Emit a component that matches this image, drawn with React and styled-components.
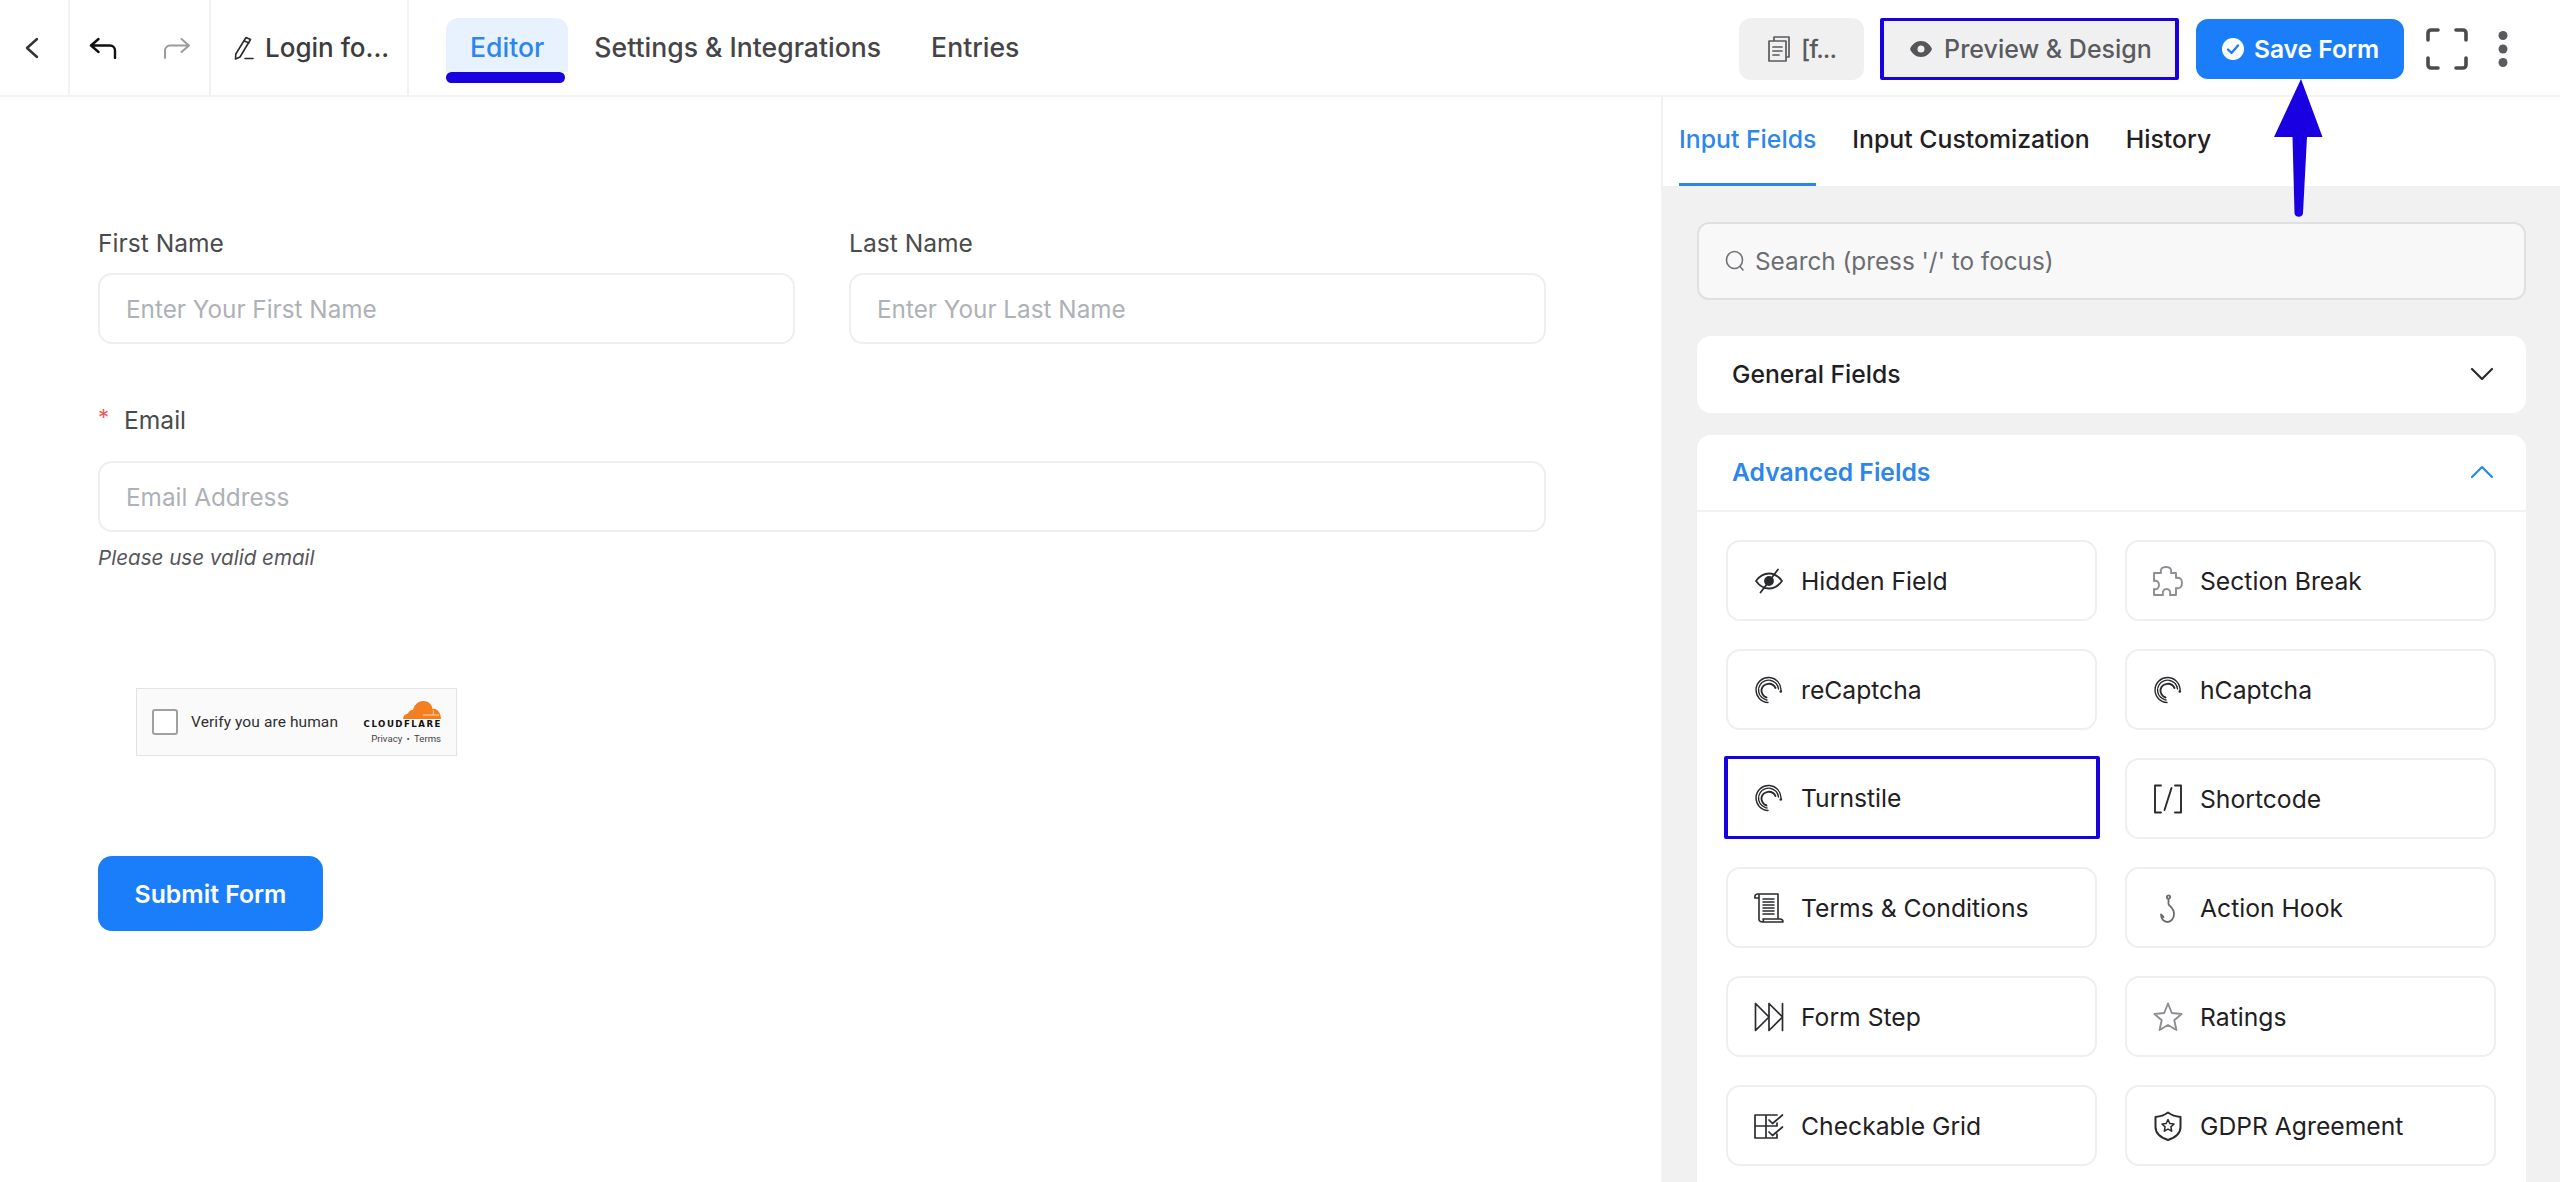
import styled, { createGlobalStyle } from "styled-components";
import { useState } from "react";

const Global = createGlobalStyle`
  * { box-sizing: border-box; }
  html, body { margin: 0; padding: 0; background: #fff; }
  body { font-family: Inter, "Liberation Sans", sans-serif; }
`;

const BLUE = "#1a7efb";
const MARK = "#1800e0";

const Page = styled.div`
  position: relative;
  width: 2560px;
  height: 1182px;
  overflow: hidden;
  display: flex;
  flex-direction: column;
  background: #fff;
`;

const TopBar = styled.header`
  height: 97px;
  flex: none;
  display: flex;
  align-items: stretch;
  border-bottom: 2px solid #f2f2f3;
`;

const Cell = styled.div`
  width: ${p => p.$w}px;
  flex: none;
  display: flex;
  align-items: center;
  gap: ${p => p.$gap || 0}px;
  padding-left: ${p => p.$pl || 0}px;
  border-right: 2px solid #f2f2f3;
`;

const PageTitle = styled.span`
  font-size: 26px;
  font-weight: 500;
  color: #3c3c3e;
  white-space: nowrap;
`;

const Nav = styled.nav`
  display: flex;
  align-items: flex-start;
  padding: 18px 0 0 37px;
  gap: 26px;
`;

const NavItem = styled.a`
  position: relative;
  height: 54px;
  display: flex;
  align-items: center;
  padding: 3px ${p => (p.$active ? 24 : 0)}px 0;
  margin-left: ${p => p.$ml || 0}px;
  border-radius: 12px 12px 0 0;
  font-size: 26.6px;
  font-weight: 500;
  white-space: nowrap;
  color: ${p => (p.$active ? "#2d86ea" : "#454547")};
  background: ${p => (p.$active ? "#e8f2ff" : "transparent")};
`;

const EditorMark = styled.span`
  position: absolute;
  left: 0;
  right: 3px;
  top: 54px;
  height: 11px;
  border-radius: 6px;
  background: ${MARK};
`;

const Actions = styled.div`
  margin-left: auto;
  display: flex;
  align-items: center;
  padding-top: 2px;
`;

const GreyBtn = styled.button`
  height: 62px;
  width: ${p => p.$w}px;
  margin-left: ${p => p.$ml || 0}px;
  display: flex;
  align-items: center;
  justify-content: center;
  gap: ${p => p.$gap || 12}px;
  padding: 0 0 0 ${p => (p.$marked ? 3 : 0)}px;
  font-family: inherit;
  font-size: 25px;
  font-weight: 500;
  letter-spacing: ${p => p.$ls || 0}px;
  color: #5a5b5e;
  background: #f0f0f1;
  border: ${p => (p.$marked ? `solid ${MARK}` : "0")};
  border-width: ${p => (p.$marked ? "3px 4px" : "0")};
  border-radius: ${p => (p.$marked ? 2 : 12)}px;
`;

const SaveBtn = styled.button`
  height: 60px;
  width: 208px;
  margin-left: 17px;
  display: flex;
  align-items: center;
  justify-content: center;
  gap: 9px;
  padding: 0;
  font-family: inherit;
  font-size: 24.6px;
  font-weight: 600;
  color: #fff;
  background: ${BLUE};
  border: 0;
  border-radius: 12px;
`;

const IconOnly = styled.span`
  display: flex;
  margin-left: ${p => p.$ml}px;
  margin-right: ${p => p.$mr || 0}px;
`;

const Arrow = styled.svg`
  position: absolute;
  left: 2268px;
  top: 76px;
`;

const Main = styled.main`
  flex: 1;
  display: flex;
  min-height: 0;
`;

const Canvas = styled.section`
  flex: 1;
  padding: 131px 115px 0 98px;
`;

const Row = styled.div`
  display: grid;
  grid-template-columns: ${p => (p.$split ? "1fr 1fr" : "1fr")};
  gap: 54px;
  margin-bottom: ${p => p.$mb || 0}px;
`;

const Label = styled.label`
  display: flex;
  align-items: center;
  height: 30px;
  margin-bottom: ${p => p.$mb || 15}px;
  font-size: 24.6px;
  color: #4a4b4d;
`;

const Star = styled.span`
  color: #f05b5b;
  width: 26px;
  font-size: 22px;
  position: relative;
  top: -3px;
`;

const InputBox = styled.div`
  height: 71px;
  display: flex;
  align-items: center;
  padding-left: 26px;
  border: 2px solid #eeeff0;
  border-radius: 14px;
  font-size: 24.3px;
  color: #aeb1b6;
  background: #fff;
`;

const Help = styled.div`
  margin-top: 13px;
  font-size: 20.6px;
  font-style: italic;
  color: #55565a;
`;

const Turnstile = styled.div`
  margin: 118px 0 0 38px;
  width: 321px;
  height: 68px;
  display: flex;
  align-items: center;
  padding-left: 15px;
  background: #fafafa;
  border: 1px solid #e3e3e3;
`;

const CheckBox = styled.span`
  width: 26px;
  height: 26px;
  flex: none;
  background: #fff;
  border: 2px solid #a0a0a0;
  border-radius: 3px;
`;

const VerifyText = styled.span`
  margin-left: 13px;
  font-family: Roboto, "Liberation Sans", sans-serif;
  font-size: 15.5px;
  color: #313131;
  white-space: nowrap;
  letter-spacing: 0.1px;
`;

const CfBlock = styled.div`
  margin-left: auto;
  margin-right: 15px;
  display: flex;
  flex-direction: column;
  align-items: flex-end;
`;

const CfWord = styled.span`
  font-family: "DejaVu Sans", sans-serif;
  font-size: 8.6px;
  font-weight: 700;
  line-height: 9px;
  letter-spacing: 1.5px;
  margin-right: -1px;
  color: #111;
  margin-top: 1px;
`;

const CfLinks = styled.span`
  margin-top: 4px;
  font-family: Roboto, "Liberation Sans", sans-serif;
  font-size: 9.6px;
  line-height: 11px;
  word-spacing: 2px;
  color: #444;
  white-space: nowrap;
`;

const SubmitBtn = styled.button`
  display: block;
  margin-top: 100px;
  width: 225px;
  height: 75px;
  padding: 0;
  font-family: inherit;
  font-size: 24.8px;
  font-weight: 600;
  color: #fff;
  background: ${BLUE};
  border: 0;
  border-radius: 14px;
`;

const Sidebar = styled.aside`
  width: 899px;
  flex: none;
  display: flex;
  flex-direction: column;
  background: #f1f1f2;
  border-left: 2px solid #f2f2f3;
`;

const SideTabs = styled.div`
  height: 89px;
  flex: none;
  display: flex;
  gap: 36px;
  padding-left: 16px;
  background: #fff;
`;

const SideTab = styled.div`
  display: flex;
  align-items: center;
  padding-bottom: 3px;
  font-size: 24.8px;
  font-weight: 500;
  white-space: nowrap;
  color: ${p => (p.$active ? "#2d86ea" : "#1f2023")};
  border-bottom: 3px solid ${p => (p.$active ? "#2d86ea" : "transparent")};
`;

const SideBody = styled.div`
  flex: 1;
  min-height: 0;
  display: flex;
  flex-direction: column;
  padding: 36px 34px 0;
`;

const Search = styled.div`
  height: 78px;
  flex: none;
  display: flex;
  align-items: center;
  gap: 10px;
  padding-left: 26px;
  margin-bottom: 36px;
  font-size: 24.3px;
  color: #6b6d71;
  background: #f8f8f9;
  border: 2px solid #dfe0e2;
  border-radius: 12px;
`;

const Card = styled.div`
  background: #fff;
  flex: ${p => (p.$open ? 1 : "none")};
  margin-bottom: ${p => (p.$open ? 0 : 22)}px;
  border-radius: ${p => (p.$open ? "14px 14px 0 0" : "14px")};
`;

const CardHead = styled.div`
  height: 77px;
  display: flex;
  align-items: center;
  justify-content: space-between;
  padding: 0 32px 2px 35px;
  font-size: 24.7px;
  font-weight: ${p => (p.$open ? 600 : 500)};
  color: ${p => (p.$open ? "#2d86ea" : "#1f2023")};
  border-bottom: ${p => (p.$open ? "2px solid #f2f2f3" : "0")};
`;

const FieldGrid = styled.div`
  display: grid;
  grid-template-columns: repeat(2, 371px);
  column-gap: 28px;
  row-gap: 28px;
  padding: 28px 29px 0;
`;

const FieldBtn = styled.div`
  height: 81px;
  display: flex;
  align-items: center;
  gap: 17px;
  padding-left: 26px;
  font-size: 24.7px;
  color: #1f2023;
  background: #fff;
  border: 2px solid #eeeff0;
  border-radius: 14px;
  ${p => p.$marked && `
    border: solid ${MARK};
    border-width: 3px 4px;
    border-radius: 2px;
    margin: -2px -3px 0 -2px;
    padding-left: 26px;
    height: 83px;
  `}
`;

const Ico = ({ children, w = 30, h = 30, vb = "0 0 30 30", sw = 1.6, color = "#2a2b2e", ...rest }) => (
  <svg width={w} height={h} viewBox={vb} fill="none" stroke={color} strokeWidth={sw} strokeLinecap="round" strokeLinejoin="round" style={{ flex: "none" }} {...rest}>
    {children}
  </svg>
);

const SpiralIcon = () => (
  <Ico sw={1.4}>
    <path d="M27 16A12.5 12.5 0 1 0 14 27.5" />
    <path d="M24.500 14A10 10 0 1 0 13 25" strokeDasharray="6 1.200" />
    <path d="M21.500 13A7.500 7.500 0 0 0 7.500 14.500C7 18 9.500 21.500 12.500 22.500" strokeWidth="1.900" />
    <circle cx="26.800" cy="16.500" r="1.300" fill="#2a2b2e" stroke="none" />
  </Ico>
);

const fields = [
  { label: "Hidden Field", icon: (
    <Ico sw={1.8}>
      <path d="M2 15C6 9.500 10 7.500 15 7.500S24 9.500 28 15C24 20.500 20 22.500 15 22.500S6 20.500 2 15z" />
      <circle cx="15" cy="15" r="4" fill="#2a2b2e" />
      <path d="M24 3.500 6.500 26.500" />
    </Ico>
  ) },
  { label: "Section Break", icon: (
    <Ico color="#8d8e91" sw={1.9}>
      <path d="M1 7H8C7 3 9 1 13 1S19 3 18 7H23V12C27 11 29 13 29 17S27 23 23 22V29H17C18 25 16 23 13.500 23S9 25 10 29H1V23C4 24 6 22 6 19S4 14 1 15Z" />
    </Ico>
  ) },
  { label: "reCaptcha", icon: <SpiralIcon /> },
  { label: "hCaptcha", icon: <SpiralIcon /> },
  { label: "Turnstile", icon: <SpiralIcon />, marked: true },
  { label: "Shortcode", icon: (
    <Ico sw={1.9}>
      <path d="M8 1.500H2v27h6M22 1.500h6v27h-6M18.500 4 11.500 26" />
    </Ico>
  ) },
  { label: "Terms & Conditions", icon: (
    <Ico sw={1.6}>
      <path d="M5 5H1C.5 3 1.500 1 3.500 1H24V26M5 2V26C5 28.500 6.500 29 9 29H29C29 27 28 26 26 26H9C9.500 27 9.500 28 9 29" />
      <path d="M9 6h11M9 9h11M9 12h11M9 15h11M9 18h11M9 21h11" strokeWidth="1.500" />
    </Ico>
  ) },
  { label: "Action Hook", icon: (
    <Ico color="#6a6b6e" sw={1.8}>
      <circle cx="15.500" cy="4" r="1.700" />
      <path d="M15.500 6v5c0 2 5.500 3.500 5.500 10 0 4.500-3 8-6.500 8S8 26 8 21.500l2.500 2.500" />
    </Ico>
  ) },
  { label: "Form Step", icon: (
    <Ico sw={1.7}>
      <path d="M1.500 1.500v27l13.500-13.500zM15 1.500v27l13.500-13.500zM28.500 1.500v27" />
    </Ico>
  ) },
  { label: "Ratings", icon: (
    <Ico color="#8d8e91" sw={1.9}>
      <path d="M15 1.500l3.800 9.500 9.700 1-7.200 6.300 2.100 9.700-8.400-5-8.400 5 2.100-9.700L1.500 12l9.700-1z" />
    </Ico>
  ) },
  { label: "Checkable Grid", icon: (
    <Ico sw={1.7}>
      <path d="M23 4H1v23h22M12 4v23M1 15h22M23 12v3M23 23v4M15 9l3.500 3.500L28.500 4M15 21l3.500 3.500L28.500 16" />
    </Ico>
  ) },
  { label: "GDPR Agreement", icon: (
    <Ico sw={2}>
      <path d="M15 1.500c3.500 2.500 7.500 4 12.500 4.500v10c0 6-5 10.500-12.500 13C7.500 26.500 2.500 22 2.500 16V6C7.500 5.500 11.500 4 15 1.500z" />
      <path d="M15 8.500l1.800 4 4.200.5-3.100 2.900.8 4.300-3.700-2.100-3.700 2.100.8-4.300L9 13l4.200-.5z" strokeWidth="1.500" />
    </Ico>
  ) },
];

export default function App() {
  const [tab] = useState("Input Fields");

  return (
    <Page>
      <Global />
      <TopBar>
        <Cell $w={70} $pl={25}>
          <Ico w={14} h={22} vb="0 0 14 22" sw={2.4} color="#333">
            <path d="M12 2 2 11l10 9" />
          </Ico>
        </Cell>
        <Cell $w={141} $pl={19} $gap={46}>
          <Ico w={28} h={22} vb="0 0 28 22" sw={2.4} color="#111">
            <path d="M9.500 2 2 8.500l7.500 6.500M2 8.500h19c3 0 5 2.500 5 5V21" />
          </Ico>
          <Ico w={28} h={22} vb="0 0 28 22" sw={2} color="#9b9b9d">
            <path d="M18.500 2 26 8.500 18.500 15M26 8.500H7c-3 0-5 2.500-5 5V21" />
          </Ico>
        </Cell>
        <Cell $w={198} $pl={22} $gap={10}>
          <Ico w={22} h={24} vb="0 0 22 24" sw={1.6} color="#2b2b2d">
            <path d="M13 1.500l4.500 2L7 21 2.500 23l.3-5zM11.500 5l4.500 2M12 22.500h8" />
          </Ico>
          <PageTitle>Login fo...</PageTitle>
        </Cell>
        <Nav>
          <NavItem $active>
            Editor
            <EditorMark />
          </NavItem>
          <NavItem>Settings &amp; Integrations</NavItem>
          <NavItem $ml={24}>Entries</NavItem>
        </Nav>
        <Actions>
          <GreyBtn $w={125} $gap={10} $ls={-1}>
            <Ico w={24} h={28} vb="0 0 24 28" sw={1.7} color="#5a5b5e">
              <path d="M7 5V2h15v20h-3M2 6h17v20H2zM6 12h9M6 16h9M6 20h6" />
            </Ico>
            [f...
          </GreyBtn>
          <GreyBtn $w={299} $ml={16} $marked>
            <svg width="22" height="16" viewBox="0 0 22 16" style={{ flex: "none" }}>
              <path d="M11 0c5 0 9 3.500 11 8-2 4.500-6 8-11 8S2 12.500 0 8c2-4.500 6-8 11-8zm0 4.500a3.500 3.500 0 1 0 0 7 3.500 3.500 0 0 0 0-7z" fill="#55565a" />
            </svg>
            Preview &amp; Design
          </GreyBtn>
          <SaveBtn>
            <svg width="24" height="24" viewBox="0 0 24 24" style={{ flex: "none" }}>
              <circle cx="12" cy="12" r="11" fill="#fff" />
              <path d="M7 12.500l3.500 3.500L17 8.500" fill="none" stroke={BLUE} strokeWidth="2.400" strokeLinecap="round" strokeLinejoin="round" />
            </svg>
            Save Form
          </SaveBtn>
          <IconOnly $ml={22}>
            <Ico w={42} h={42} vb="0 0 42 42" sw={3.6} color="#4a4b4e">
              <path d="M2 12V5a3 3 0 0 1 3-3h7M30 2h7a3 3 0 0 1 3 3v7M40 30v7a3 3 0 0 1-3 3h-7M12 40H5a3 3 0 0 1-3-3v-7" />
            </Ico>
          </IconOnly>
          <IconOnly $ml={30} $mr={52}>
            <svg width="10" height="36" viewBox="0 0 10 36">
              <circle cx="5" cy="4.500" r="4.500" fill="#5a5b5e" />
              <circle cx="5" cy="18" r="4.500" fill="#5a5b5e" />
              <circle cx="5" cy="31.500" r="4.500" fill="#5a5b5e" />
            </svg>
          </IconOnly>
        </Actions>
      </TopBar>

      <Arrow width="60" height="146" viewBox="0 0 60 146">
        <path d="M33 3 54.500 61H39L35 137c0 5-8.500 5-8.500 0L24.500 61H6z" fill={MARK} />
      </Arrow>

      <Main>
        <Canvas>
          <Row $split $mb={61}>
            <div>
              <Label>First Name</Label>
              <InputBox>Enter Your First Name</InputBox>
            </div>
            <div>
              <Label>Last Name</Label>
              <InputBox>Enter Your Last Name</InputBox>
            </div>
          </Row>
          <Row>
            <div>
              <Label $mb={26}><Star>*</Star>Email</Label>
              <InputBox>Email Address</InputBox>
              <Help>Please use valid email</Help>
            </div>
          </Row>
          <Turnstile>
            <CheckBox />
            <VerifyText>Verify you are human</VerifyText>
            <CfBlock>
              <svg width="38" height="18" viewBox="0 0 38 18">
                <path d="M0 18c0-3 2-5 5-5.500C6 10 8 8.500 10 9c1-5 5-9 10-9 5.500 0 9 3.500 9.500 8 4.500-1 8.500 4 8.500 10z" fill="#f38020" />
                <path d="M20 14h16M30 14c.5-2 .5-4 0-5" stroke="#fbd3a8" strokeWidth="1" fill="none" />
              </svg>
              <CfWord>CLOUDFLARE</CfWord>
              <CfLinks>Privacy • Terms</CfLinks>
            </CfBlock>
          </Turnstile>
          <SubmitBtn>Submit Form</SubmitBtn>
        </Canvas>

        <Sidebar>
          <SideTabs>
            {["Input Fields", "Input Customization", "History"].map(t => (
              <SideTab key={t} $active={t === tab}>{t}</SideTab>
            ))}
          </SideTabs>
          <SideBody>
            <Search>
              <Ico w={20} h={24} vb="0 0 20 24" sw={1.6} color="#707276">
                <ellipse cx="9.500" cy="11" rx="8" ry="8.500" />
                <path d="M15 17.500l3 3.500" />
              </Ico>
              Search (press '/' to focus)
            </Search>
            <Card>
              <CardHead>
                General Fields
                <Ico w={24} h={14} vb="0 0 24 14" sw={2.2} color="#2a2b2e">
                  <path d="M2 2l10 10L22 2" />
                </Ico>
              </CardHead>
            </Card>
            <Card $open>
              <CardHead $open>
                Advanced Fields
                <Ico w={24} h={14} vb="0 0 24 14" sw={2.2} color="#2d86ea">
                  <path d="M2 12 12 2l10 10" />
                </Ico>
              </CardHead>
              <FieldGrid>
                {fields.map(f => (
                  <FieldBtn key={f.label} $marked={f.marked}>
                    {f.icon}
                    {f.label}
                  </FieldBtn>
                ))}
              </FieldGrid>
            </Card>
          </SideBody>
        </Sidebar>
      </Main>
    </Page>
  );
}
